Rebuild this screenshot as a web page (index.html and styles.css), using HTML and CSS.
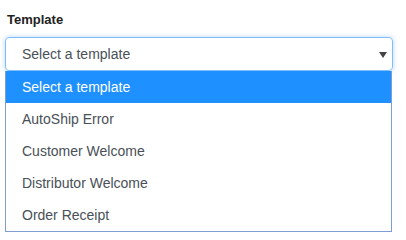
FILE: index.html
```html
<!DOCTYPE html>
<html lang="en">
<head>
  <meta charset="UTF-8">
  <title>Template picker</title>
  <link rel="stylesheet" href="styles.css">
</head>
<body>
  <div class="field">
    <label class="field-label">Template</label>
    <div class="select-box">
      <span>Select a template</span>
      <svg class="arrow" width="8" height="6" viewBox="0 0 8 6"><path d="M0 0h8L4 6z" fill="#444"/></svg>
    </div>
    <!-- open dropdown list -->
    <ul class="options">
      <li class="option selected">Select a template</li>
      <li class="option">AutoShip Error</li>
      <li class="option">Customer Welcome</li>
      <li class="option">Distributor Welcome</li>
      <li class="option">Order Receipt</li>
    </ul>
  </div>
</body>
</html>
```

FILE: styles.css
```css
body {
  margin: 0;
  background: #fff;
  font-family: "Liberation Sans", Arial, sans-serif;
}

.field {
  padding: 11px 13px 0 5px;
}

.field-label {
  display: block;
  margin: 0 0 8px 2px;
  font-size: 13px;
  font-weight: bold;
  color: #222;
  line-height: 18px;
}

.select-box {
  display: flex;
  align-items: center;
  justify-content: space-between;
  height: 32px;
  padding: 0 5px 0 16px;
  border: 1px solid #80bdff;
  border-radius: 4px;
  box-shadow: 0 0 5px rgba(0, 123, 255, 0.3);
  font-size: 14px;
  color: #495057;
}

.arrow {
  margin-top: 1px;
}

.options {
  list-style: none;
  margin: 0 1px 0 0;
  padding: 0;
  border: 1px solid #7f9fd4;
  border-top: none;
}

.option {
  height: 32px;
  line-height: 32px;
  padding-left: 16px;
  font-size: 14px;
  color: #495057;
}

.option.selected {
  background: #1e90ff;
  color: #fff;
}
```
